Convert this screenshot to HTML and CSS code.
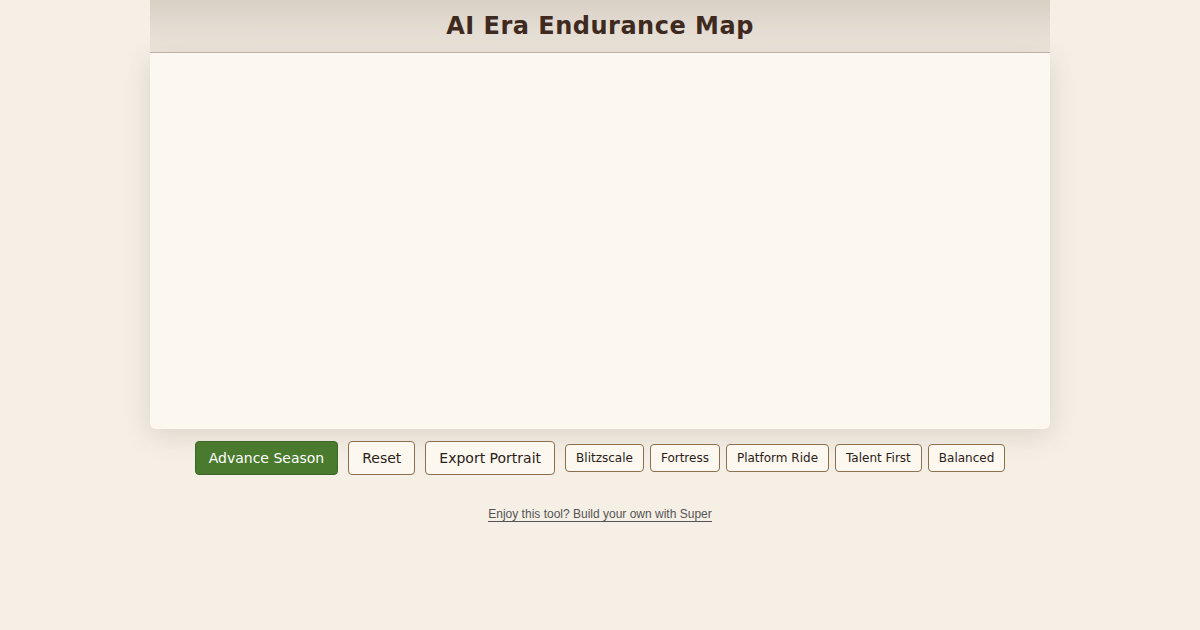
FILE: index.html
```html
<!DOCTYPE html>
<html lang="en">
<head>
  <meta charset="UTF-8">
  <meta name="viewport" content="width=device-width, initial-scale=1.0">
  <title>AI Era Endurance Map</title>
  <link rel="stylesheet" href="styles.css">
</head>
<body>
  <div class="wrap">
    <header class="top">
      <h1>AI Era Endurance Map</h1>
    </header>

    <div class="board">
      <canvas id="map" width="900" height="376"></canvas>
    </div>

    <div class="controls">
      <button class="btn primary">Advance Season</button>
      <button class="btn">Reset</button>
      <button class="btn">Export Portrait</button>
      <div class="presets">
        <button class="chip">Blitzscale</button>
        <button class="chip">Fortress</button>
        <button class="chip">Platform Ride</button>
        <button class="chip">Talent First</button>
        <button class="chip">Balanced</button>
      </div>
    </div>
  </div>

  <footer class="credit">
    <a href="#">Enjoy this tool? Build your own with Super</a>
  </footer>
</body>
</html>
```

FILE: styles.css
```css
body {
  margin: 0;
  padding: 0;
  background-color: #f5efe6;
  font-family: "DejaVu Sans", sans-serif;
  color: #3e2a1f;
}

.wrap {
  width: 900px;
  margin: 0 auto;
}

.top {
  height: 52px;
  background: linear-gradient(to bottom, #d8d0c5, #ede6dc);
  border-bottom: 1px solid #c2b7aa;
  display: flex;
  align-items: center;
  justify-content: center;
}

h1 {
  margin: 0;
  font-size: 24px;
  letter-spacing: 0.5px;
  font-weight: bold;
  color: #3e2a1f;
}

.board {
  height: 376px;
  background-color: #fcf8f0;
  border-radius: 0 0 6px 6px;
  box-shadow: 0 6px 28px rgba(90, 70, 40, 0.16);
}

.board canvas {
  display: block;
  width: 100%;
  height: 100%;
}

.controls {
  display: flex;
  justify-content: center;
  align-items: center;
  gap: 10px;
  margin-top: 12px;
}

.presets {
  display: flex;
  gap: 6px;
}

.btn {
  font-family: "DejaVu Sans", sans-serif;
  font-size: 14px;
  line-height: 16px;
  padding: 8px 13px;
  background-color: #fcf8f0;
  color: #2b2018;
  border: 1px solid #8b6f4e;
  border-radius: 4px;
  cursor: pointer;
}

.btn.primary {
  background-color: #4a7a2e;
  border-color: #3d6626;
  color: #fff;
}

.chip {
  font-family: "DejaVu Sans", sans-serif;
  font-size: 12px;
  line-height: 16px;
  padding: 5px 10px;
  background-color: #fcf8f0;
  color: #2b2018;
  border: 1px solid #8b6f4e;
  border-radius: 4px;
  cursor: pointer;
}

.credit {
  text-align: center;
  margin-top: 28px;
}

.credit a {
  font-family: "Liberation Sans", Arial, sans-serif;
  font-size: 12px;
  line-height: 14px;
  color: #555;
  text-decoration: none;
  border-bottom: 1px solid #555;
}
```
